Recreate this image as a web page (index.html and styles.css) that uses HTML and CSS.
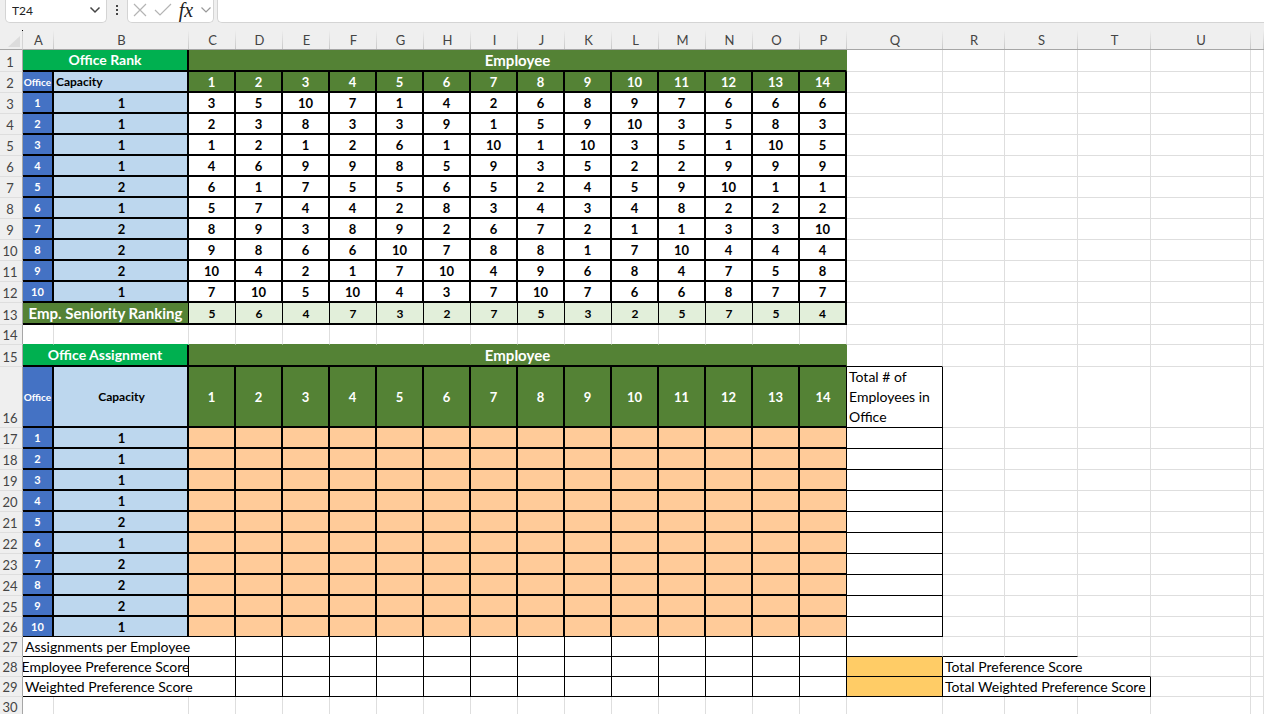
FILE: index.html
```html
<!DOCTYPE html>
<html lang="en">
<head>
<meta charset="utf-8">
<title>Office Assignment</title>
<link rel="stylesheet" href="styles.css">
</head>
<body>
<header class="formula-bar">
  <div class="name-box">
    <input class="name-input" type="text" value="T24" aria-label="Name box">
    <button class="icon-button" type="button" aria-label="Name list">
      <svg width="12" height="8" viewBox="0 0 12 8"><path d="M1.5 1.5L6 6l4.5-4.5" fill="none" stroke="#444" stroke-width="1.5"/></svg>
    </button>
  </div>
  <svg class="grip" width="4" height="14" viewBox="0 0 4 14" fill="#444"><path d="M1 1h2v2H1zM1 5h2v2H1zM1 9h2v2H1z"/></svg>
  <div class="actions">
    <button class="icon-button" type="button" aria-label="Cancel">
      <svg width="14" height="14" viewBox="0 0 14 14"><path d="M1 1l12 12M13 1L1 13" fill="none" stroke="#b4b4b4" stroke-width="1.2"/></svg>
    </button>
    <button class="icon-button" type="button" aria-label="Enter">
      <svg width="18" height="14" viewBox="0 0 18 14"><path d="M1 7l5 5L17 1" fill="none" stroke="#b4b4b4" stroke-width="1.2"/></svg>
    </button>
    <button class="icon-button fx" type="button" aria-label="Insert function">fx</button>
    <button class="icon-button" type="button" aria-label="Function list">
      <svg width="12" height="8" viewBox="0 0 12 8"><path d="M1.5 1.5L6 6l4.5-4.5" fill="none" stroke="#999" stroke-width="1.2"/></svg>
    </button>
  </div>
  <input class="formula-input" type="text" aria-label="Formula">
</header>
<main class="sheet">
  <table class="grid" id="grid"></table>
</main>
<script src="sheet.js"></script>
</body>
</html>
```
FILE: styles.css
```css
* { box-sizing: border-box; }
body {
  margin: 0;
  height: 100vh;
  overflow: hidden;
  background: #fff;
  color: #000;
  font-family: Lato, "Open Sans", sans-serif;
  font-size: 14px;
}
button, input { font: inherit; color: inherit; border: 0; padding: 0; background: none; outline: 0; }

.formula-bar {
  display: flex;
  align-items: flex-start;
  height: 30px;
  padding-left: 5px;
  background: #efefef;
}
.name-box, .actions {
  display: flex;
  align-items: center;
  height: 23px;
  background: #fff;
  border: 1px solid #d4d4d4;
  border-top: 0;
  border-radius: 0 0 5px 5px;
}
.name-box { width: 102px; padding: 0 5px 2px 6px; }
.name-input { flex: 1; min-width: 0; height: 20px; font-size: 12px; color: #222; }
.icon-button { display: flex; align-items: center; justify-content: center; }
.grip { margin: 4px 8px 0; }
.actions { width: 87px; padding: 0 1px 2px 5px; justify-content: space-between; }
.fx { font: italic 400 20px/20px "Liberation Serif", serif; color: #222; }
.formula-input {
  flex: 1;
  height: 23px;
  margin-left: 3px;
  background: #fff;
  border: 1px solid #d4d4d4;
  border-width: 0 0 1px 1px;
  border-radius: 0 0 0 5px;
}

.grid { width: 100%; table-layout: fixed; border-collapse: separate; border-spacing: 0; }
.w-head { width: 23px; }
.w-a { width: 31px; }
.w-b { width: 135px; }
.w-emp { width: 47px; }
.w-q { width: 96px; }
.w-r { width: 62px; }
.w-s { width: 73px; }
.w-u { width: 100px; }

.h20 { height: 20px; }
.h21 { height: 21px; }
.h22 { height: 22px; }
.h61 { height: 61px; }

th, td {
  padding: 0;
  border: 0 solid #dedede;
  border-width: 0 1px 1px 0;
  text-align: center;
  vertical-align: middle;
  white-space: nowrap;
  overflow: hidden;
  line-height: 18px;
  font-weight: 400;
}
.col-head {
  font-size: 13px;
  color: #444;
  border-right: 0;
  border-bottom-color: #a6a6a6;
  background: linear-gradient(#efefef, #c8c8c8) right / 1px 100% no-repeat #efefef;
}
.row-head {
  font-size: 13px;
  color: #444;
  background: #efefef;
  border-right-color: #a6a6a6;
  vertical-align: bottom;
  padding-right: 2px;
}
.corner {
  position: relative;
  overflow: visible;
  background: #efefef;
  border-right-color: #d4d4d4;
  border-bottom-color: #a6a6a6;
}
.corner svg { display: block; margin: 4px 0 0 7px; }
.corner::after { content: ""; position: absolute; top: 0; right: -1px; width: 1px; height: 1px; background: #000; }

.num { font-weight: 700; font-size: 13px; }
.title { font-weight: 700; color: #fff; background: #00b050; }
.dark { font-weight: 700; color: #fff; background: #548235; }
.employee-title { font-size: 15px; }
.office { font-weight: 700; font-size: 11px; color: #fff; background: #4472c4; }
.office-label { font-size: 10px; }
.capacity { font-weight: 700; font-size: 13px; background: #bdd7ee; padding-left: 2px; }
.capacity-label { font-size: 12px; }
.senior-title { font-size: 15px; }
.senior { font-weight: 700; font-size: 12px; background: #e2efda; padding-top: 2px; }
.peach { background: #ffcb99; }
.amber { background: #ffcc66; }
.left { text-align: left; padding-left: 2px; }
.wrap { white-space: normal; line-height: 20px; }

.k-r { border-right: 1px solid #000; }
.k-b { border-bottom: 1px solid #000; }
.k-rr { border-right: 2px solid #000; }
.k-bb { border-bottom: 2px solid #000; }
.edge-dark { border-right-color: #548235; }
.under-title { border-bottom-color: #00b050; }
.under-dark { border-bottom-color: #548235; }
.spill { display: flex; justify-content: center; }
```
FILE: sheet.js
```js
const ranks = [
  [1, 3, 5, 10, 7, 1, 4, 2, 6, 8, 9, 7, 6, 6, 6],
  [1, 2, 3, 8, 3, 3, 9, 1, 5, 9, 10, 3, 5, 8, 3],
  [1, 1, 2, 1, 2, 6, 1, 10, 1, 10, 3, 5, 1, 10, 5],
  [1, 4, 6, 9, 9, 8, 5, 9, 3, 5, 2, 2, 9, 9, 9],
  [2, 6, 1, 7, 5, 5, 6, 5, 2, 4, 5, 9, 10, 1, 1],
  [1, 5, 7, 4, 4, 2, 8, 3, 4, 3, 4, 8, 2, 2, 2],
  [2, 8, 9, 3, 8, 9, 2, 6, 7, 2, 1, 1, 3, 3, 10],
  [2, 9, 8, 6, 6, 10, 7, 8, 8, 1, 7, 10, 4, 4, 4],
  [2, 10, 4, 2, 1, 7, 10, 4, 9, 6, 8, 4, 7, 5, 8],
  [1, 7, 10, 5, 10, 4, 3, 7, 10, 7, 6, 6, 8, 7, 7]
];
const seniority = [5, 6, 4, 7, 3, 2, 7, 5, 3, 2, 5, 7, 5, 4];
const employees = seniority.map((_, i) => i + 1);

const cell = (cls = '', text = '', span = 1) =>
  `<td class="${cls}"${span > 1 ? ` colspan="${span}"` : ''}>${text}</td>`;
const blank = (n, cls = '') => cell(cls).repeat(n);

let rowNumber = 0;
const row = (height, cells) =>
  `<tr class="${height}"><th class="row-head" scope="row">${++rowNumber}</th>${cells}</tr>`;

const titleRow = (text, q) => row('h22',
  cell('title k-rr k-bb', text, 2) + cell('dark employee-title k-bb edge-dark', 'Employee', 14) + cell(q) + blank(5));

const columns = ['w-head', 'w-a', 'w-b', ...employees.map(() => 'w-emp'), 'w-q', 'w-r', 'w-s', 'w-s', 'w-u', ''];
let html = `<colgroup>${columns.map(c => `<col class="${c}">`).join('')}</colgroup>`;

html += '<thead><tr class="h20"><th class="corner"><svg width="13" height="13"><path d="M13 1v11H1z" fill="#dcdcdc"/></svg></th>' +
  [...'ABCDEFGHIJKLMNOPQRSTU'].map(l => `<th class="col-head" scope="col">${l}</th>`).join('') +
  '<th class="col-head"></th></tr></thead><tbody>';

html += titleRow('Office Rank', '');
html += row('h21', cell('office office-label k-rr k-bb', 'Office') + cell('capacity capacity-label left k-rr k-bb', 'Capacity') +
  employees.map(n => cell('dark num k-rr k-bb', n)).join('') + blank(6));
ranks.forEach(([capacity, ...values], i) => {
  html += row('h21', cell('office k-rr k-bb', i + 1) + cell('capacity k-rr k-bb', capacity) +
    values.map(v => cell('num k-rr k-bb', v)).join('') + blank(6));
});
html += row('h22', cell('dark senior-title k-r k-bb', 'Emp. Seniority Ranking', 2) +
  seniority.map((v, i) => cell(`senior k-bb ${i === 13 ? 'k-rr' : 'k-r'}`, v)).join('') + blank(6));
html += row('h20', blank(2, 'under-title') + blank(14, 'under-dark') + blank(6));

html += titleRow('Office Assignment', 'k-b');
html += row('h61', cell('office office-label k-rr k-bb', 'Office') + cell('capacity capacity-label k-rr k-bb', 'Capacity') +
  employees.map(n => cell(`dark num k-bb ${n === 14 ? 'k-r' : 'k-rr'}`, n)).join('') +
  cell('left wrap k-r k-b', 'Total # of Employees in Office') + blank(5));
ranks.forEach(([capacity], i) => {
  const last = i === 9;
  const b = last ? 'k-b' : 'k-bb';
  html += row(last ? 'h20' : 'h21', cell(`office k-rr ${b}`, i + 1) + cell(`capacity k-rr ${b}`, capacity) +
    employees.map(n => cell(`peach ${b} ${n === 14 ? 'k-r' : 'k-rr'}`)).join('') + cell('k-r k-b') + blank(5));
});

html += row('h20', cell('left k-r k-b', 'Assignments per Employee', 3) + blank(13, 'k-r k-b') +
  cell('k-b') + blank(2, 'k-b') + blank(3));
html += row('h20', cell('k-r k-b', '<span class="spill">Employee Preference Score</span>', 2) + blank(14, 'k-r k-b') +
  cell('amber k-r k-b') + cell('left k-b', 'Total Preference Score', 3) + blank(2));
html += row('h20', cell('left k-r k-b', 'Weighted Preference Score', 3) + blank(13, 'k-r k-b') +
  cell('amber k-r k-b') + cell('left k-r k-b', 'Total Weighted Preference Score', 3) + blank(2));
html += row('h20', blank(22));

document.getElementById('grid').innerHTML = html + '</tbody>';
```
